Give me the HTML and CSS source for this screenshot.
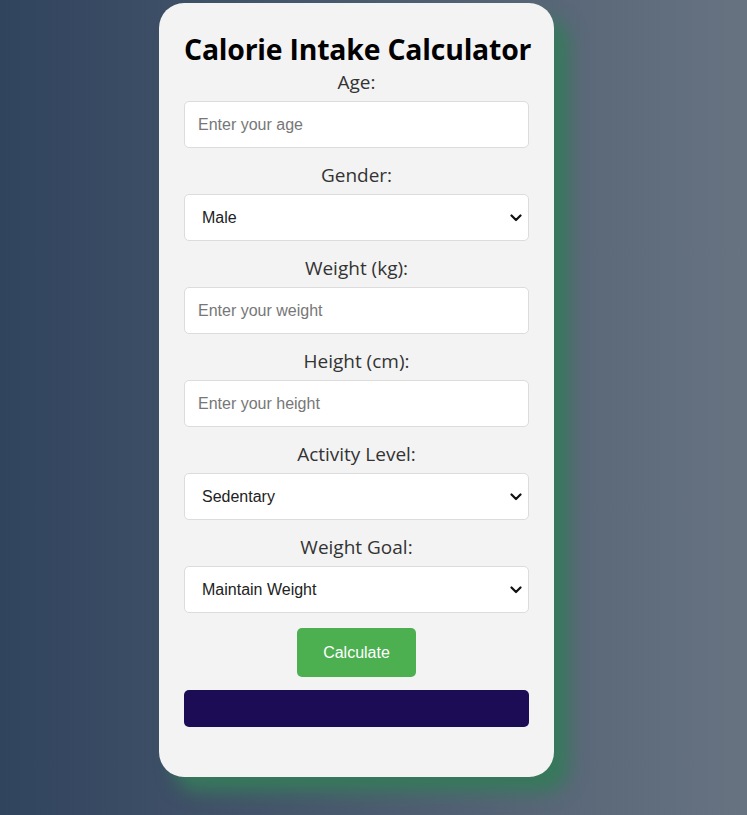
FILE: index.html
```html
<!DOCTYPE html>
<html lang="en">
<head>
<meta charset="utf-8">
<title>Calorie Intake Calculator</title>
<link rel="stylesheet" href="styles.css">
</head>
<body>
<div class="page">
  <div class="card">
    <h2 class="title">Calorie Intake Calculator</h2>
    <form class="form">
      <label class="label" for="age">Age:</label>
      <input class="field" id="age" type="number" placeholder="Enter your age">

      <label class="label" for="gender">Gender:</label>
      <select class="field select" id="gender">
        <option>Male</option>
        <option>Female</option>
      </select>

      <label class="label" for="weight">Weight (kg):</label>
      <input class="field" id="weight" type="number" placeholder="Enter your weight">

      <label class="label" for="height">Height (cm):</label>
      <input class="field" id="height" type="number" placeholder="Enter your height">

      <label class="label" for="activity">Activity Level:</label>
      <select class="field select" id="activity">
        <option>Sedentary</option>
        <option>Lightly Active</option>
        <option>Moderately Active</option>
        <option>Very Active</option>
      </select>

      <label class="label" for="goal">Weight Goal:</label>
      <select class="field select last" id="goal">
        <option>Maintain Weight</option>
        <option>Lose Weight</option>
        <option>Gain Weight</option>
      </select>

      <button class="btn" type="button">Calculate</button>
    </form>
    <div class="result"></div>
  </div>
</div>
</body>
</html>
```

FILE: styles.css
```css
html, body {
  margin: 0;
  padding: 0;
  height: 100%;
}

body {
  background: linear-gradient(90deg, #31445e 0%, #677381 100%);
  font-family: "Open Sans", "Noto Sans", sans-serif;
}

.page {
  padding: 3px 0 0 159px;
}

.card {
  box-sizing: border-box;
  width: 395px;
  height: 774px;
  background: #f3f3f3;
  border-radius: 25px;
  padding: 25px 25px 50px;
  box-shadow: 15px 15px 18px #37795c;
  display: flex;
  flex-direction: column;
}

.title {
  margin: 0;
  font-size: 28.4px;
  line-height: 42px;
  font-weight: 700;
  color: #000;
  text-align: center;
  white-space: nowrap;
  letter-spacing: -0.2px;
}

.form {
  display: flex;
  flex-direction: column;
  flex-shrink: 0;
}

.label {
  display: block;
  text-align: center;
  font-size: 19px;
  line-height: 24px;
  color: #333;
  margin-bottom: 7px;
}

.field {
  box-sizing: border-box;
  width: 345px;
  height: 47px;
  margin: 0 0 15px;
  padding: 0 13px;
  border: 1px solid #dcdcdc;
  border-radius: 5px;
  background-color: #fff;
  font-family: "Liberation Sans", Arial, sans-serif;
  font-size: 16px;
  color: #222;
  outline: none;
}

.field::placeholder {
  color: #777;
}

.select {
  -webkit-appearance: none;
  appearance: none;
  padding-left: 17px;
  background-image: url("data:image/svg+xml;utf8,<svg xmlns='http://www.w3.org/2000/svg' width='12' height='8' viewBox='0 0 12 8'><path d='M1.5 1.5 L6 6 L10.5 1.5' fill='none' stroke='%23111' stroke-width='2.2' stroke-linecap='round' stroke-linejoin='round'/></svg>");
  background-repeat: no-repeat;
  background-position: right 6px center;
  background-size: 12px 8px;
}

.last {
  margin-bottom: 15px;
}

.btn {
  align-self: center;
  box-sizing: border-box;
  width: 119px;
  height: 49px;
  border: none;
  border-radius: 5px;
  background: #4caf50;
  color: #fff;
  font-family: "Liberation Sans", Arial, sans-serif;
  font-size: 16px;
  cursor: pointer;
}

.result {
  flex-shrink: 0;
  margin-top: 13px;
  height: 37px;
  border-radius: 5px;
  background: #1b0c55;
}
```
